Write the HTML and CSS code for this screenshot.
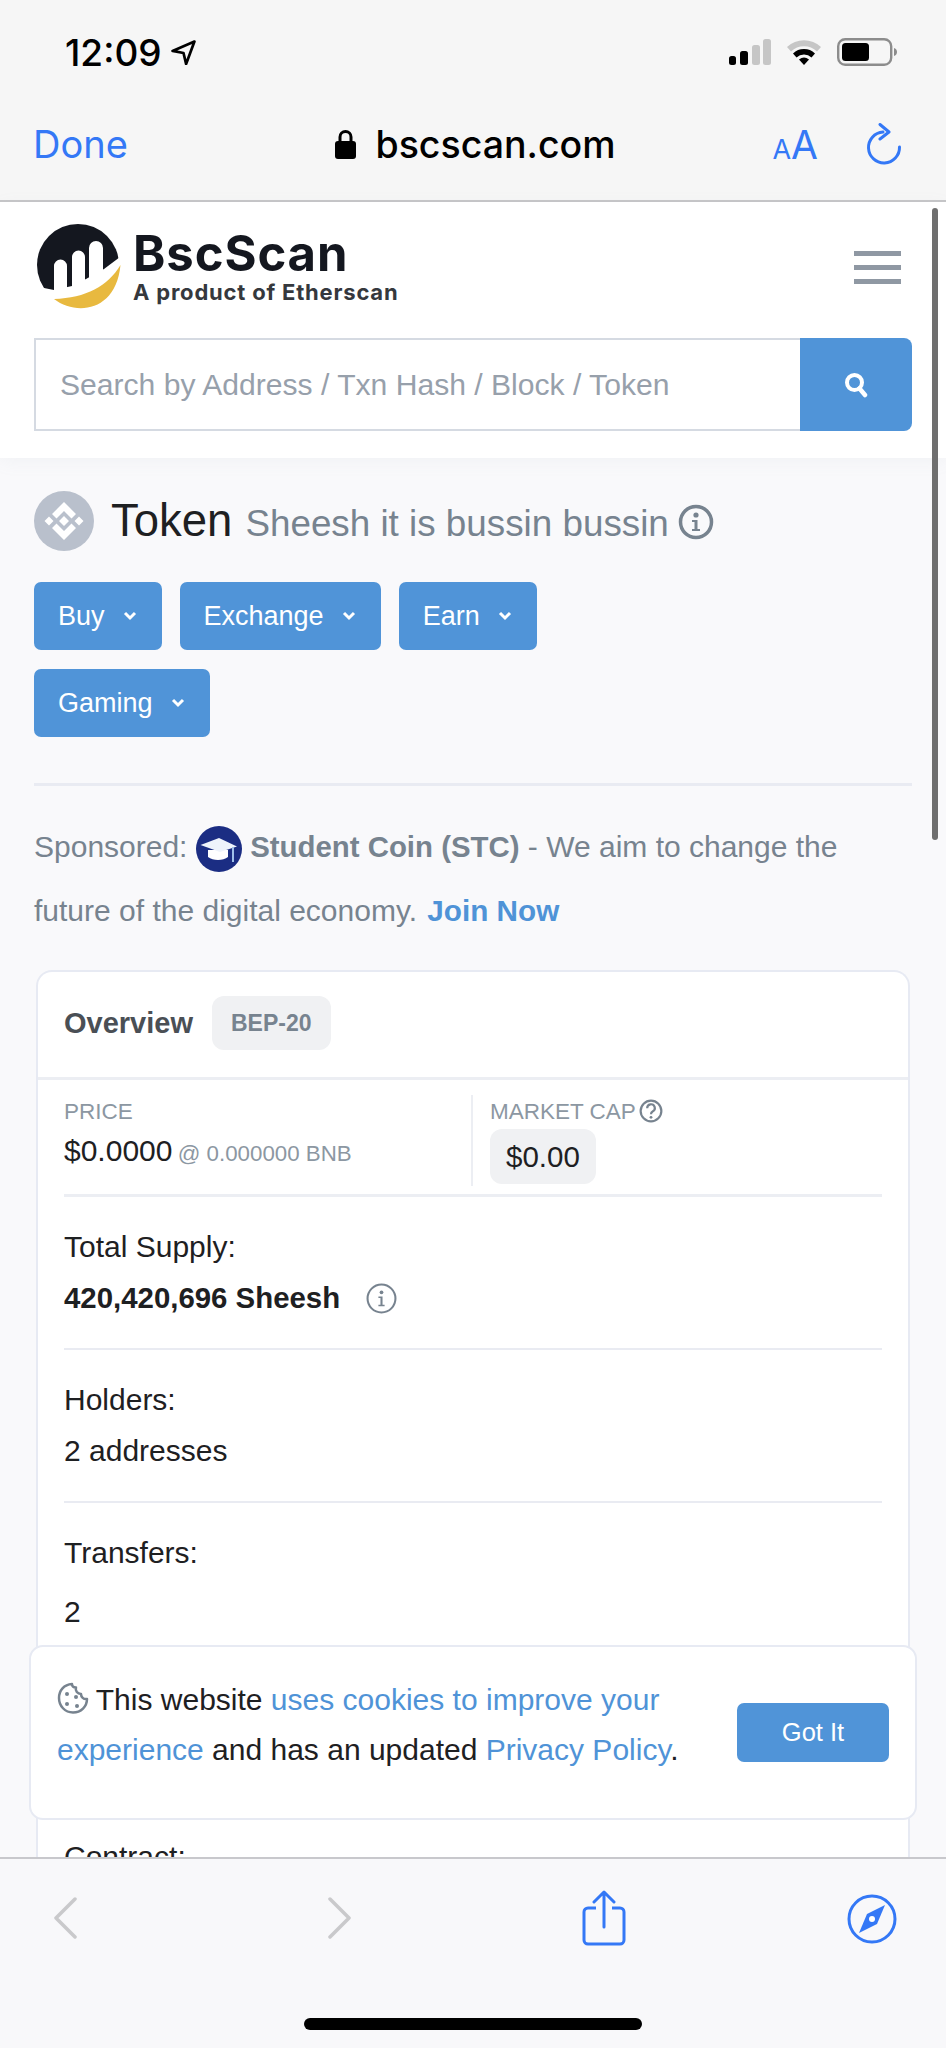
FILE: index.html
```html
<!DOCTYPE html>
<html lang="en">
	<head>
		<meta charset="UTF-8">
		<meta name="viewport" content="width=device-width, initial-scale=1.0">
		<title>Sheesh it is bussin bussin Token</title>
		<link rel="stylesheet" href="styles.css">
	</head>
	<body>
		<div class="browser-top">
			<div class="status-bar">
				<span class="time">12:09</span>
				<svg class="location" viewBox="0 0 24 24"><path d="M22.5 1.5 L1.5 10.5 L12 12.5 L14.5 23 Z" fill="none" stroke="#000" stroke-width="2.6" stroke-linejoin="round"/></svg>
				<div class="status-icons">
					<svg class="signal" viewBox="0 0 42 26">
						<rect x="0" y="17" width="7" height="9" rx="2.5" fill="#000"/>
						<rect x="11" y="12" width="8" height="14" rx="2.5" fill="#000"/>
						<rect x="23" y="6" width="8" height="20" rx="2.5" fill="#c6c6c6"/>
						<rect x="34" y="0" width="8" height="26" rx="2.5" fill="#c6c6c6"/>
					</svg>
					<svg class="wifi" viewBox="0 0 36 26">
						<path d="M1 8 A 25 25 0 0 1 35 8 L31 12.5 A 19 19 0 0 0 5 12.5 Z" fill="#c6c6c6"/>
						<path d="M7 14.5 A 16 16 0 0 1 29 14.5 L25.5 18.5 A 11 11 0 0 0 10.5 18.5 Z" fill="#000"/>
						<path d="M13 20.5 A 8 8 0 0 1 23 20.5 L18 26 Z" fill="#000"/>
					</svg>
					<svg class="battery" viewBox="0 0 60 28">
						<rect x="1.2" y="1.2" width="53" height="25.6" rx="7" fill="none" stroke="#8c8c8c" stroke-width="2.4"/>
						<rect x="5" y="5" width="27" height="18" rx="3.5" fill="#000"/>
						<path d="M57 10 C59.5 11 60 12.5 60 14 C60 15.500 59.500 17 57 18 Z" fill="#8c8c8c"/>
					</svg>
				</div>
			</div>
			<div class="toolbar">
				<a class="done" href="#">Done</a>
				<div class="address">
					<svg class="lock" viewBox="0 0 21 30"><path d="M5 13 V8 A5.500 5.500 0 0 1 16 8 V13" fill="none" stroke="#000" stroke-width="3"/><rect x="0" y="12" width="21" height="18" rx="3" fill="#000"/></svg>
					<span>bscscan.com</span>
				</div>
				<div class="toolbar-actions">
					<span class="text-size"><small>A</small>A</span>
					<svg class="reload" viewBox="0 0 36 42"><path d="M17 9 A 15.500 15.500 0 1 0 33.500 24" fill="none" stroke="#3478f6" stroke-width="3" stroke-linecap="round"/><path d="M14 1.500 L23 9 L14 16" fill="none" stroke="#3478f6" stroke-width="3" stroke-linecap="round" stroke-linejoin="round"/></svg>
				</div>
			</div>
		</div>

		<header class="site-header">
			<div class="brand-row">
				<a class="brand" href="#">
					<svg class="brand-logo" viewBox="0 0 86 86">
						<circle cx="42" cy="41" r="41" fill="#14171f"/>
						<path d="M18 80 V42 A6 6 0 0 1 31 42 V80 Z M36 80 V33 A6 6 0 0 1 49 33 V80 Z M53 80 V24 A6 6 0 0 1 67 24 V80 Z" fill="#fff"/>
						<path d="M3 63 L18 66 L36 62 L50 55 L68 45 L84 33 L90 33 L90 90 L0 90 Z" fill="#fff"/>
						<path d="M18 75 C40 92 80 88 84.500 41 C72 62 50 74 18 75 Z" fill="#e8b93f"/>
					</svg>
					<div class="brand-text">
						<div class="brand-name">BscScan</div>
						<div class="brand-sub">A product of Etherscan</div>
					</div>
				</a>
				<div class="hamburger"><span></span><span></span><span></span></div>
			</div>
			<form class="search">
				<input type="text" placeholder="Search by Address / Txn Hash / Block / Token">
				<button type="button" class="search-btn">
					<svg viewBox="0 0 24 26"><circle cx="10.500" cy="10.500" r="7.500" fill="none" stroke="#fff" stroke-width="4"/><path d="M15.500 16.500 L21 23" stroke="#fff" stroke-width="4.500" stroke-linecap="round"/></svg>
				</button>
			</form>
		</header>

		<main class="content">
			<div class="page-title">
				<svg class="token-logo" viewBox="0 0 60 60">
					<circle cx="30" cy="30" r="30" fill="#b9c0cc"/>
					<path d="M30 11 L42 23 L37.500 27.500 L30 20 L22.500 27.500 L18 23 Z M30 49 L42 37 L37.500 32.500 L30 40 L22.500 32.500 L18 37 Z M30 25 L35 30 L30 35 L25 30 Z M15 25.500 L19.500 30 L15 34.500 L10.500 30 Z M45 25.500 L49.500 30 L45 34.500 L40.500 30 Z" fill="#fff"/>
				</svg>
				<h1>Token</h1>
				<span class="token-name">Sheesh it is bussin bussin</span>
				<svg class="title-info" viewBox="0 0 36 36"><circle cx="18" cy="18" r="15.500" fill="none" stroke="#77838f" stroke-width="3.500"/><circle cx="18" cy="11" r="2.600" fill="#77838f"/><path d="M14 16 H19.500 V25 H22 V27 H14 V25 H16.500 V18 H14 Z" fill="#77838f"/></svg>
			</div>

			<div class="menu-buttons">
				<a class="menu-btn" href="#">Buy <svg viewBox="0 0 14 10"><path d="M2 2 L7 7 L12 2" fill="none" stroke="#fff" stroke-width="3"/></svg></a>
				<a class="menu-btn" href="#">Exchange <svg viewBox="0 0 14 10"><path d="M2 2 L7 7 L12 2" fill="none" stroke="#fff" stroke-width="3"/></svg></a>
				<a class="menu-btn" href="#">Earn <svg viewBox="0 0 14 10"><path d="M2 2 L7 7 L12 2" fill="none" stroke="#fff" stroke-width="3"/></svg></a>
				<a class="menu-btn" href="#">Gaming <svg viewBox="0 0 14 10"><path d="M2 2 L7 7 L12 2" fill="none" stroke="#fff" stroke-width="3"/></svg></a>
			</div>

			<hr class="rule">

			<p class="sponsored">
				Sponsored:
				<svg class="coin" viewBox="0 0 46 46">
					<circle cx="23" cy="23" r="23" fill="#1b2d83"/>
					<path d="M12 24 H32 V31 C27 35 17 35 12 31 Z" fill="#fff"/>
					<path d="M4.500 19 L23 12 L41 20.500 L24 26 Z" fill="#eef3fb"/>
					<path d="M37 21 V36" stroke="#9fc0ea" stroke-width="2"/>
				</svg>
				<b>Student Coin (STC)</b> - We aim to change the future of the digital economy. <a href="#">Join Now</a>
			</p>

			<section class="card">
				<div class="card-head">
					<h2>Overview</h2>
					<span class="tag">BEP-20</span>
				</div>
				<div class="card-body">
					<div class="stats">
						<div class="stat">
							<div class="stat-label">PRICE</div>
							<div class="stat-value">$0.0000 <small>@ 0.000000 BNB</small></div>
						</div>
						<div class="stat stat-cap">
							<div class="stat-label">MARKET CAP
								<svg class="help" viewBox="0 0 22 22"><circle cx="11" cy="11" r="9.500" fill="none" stroke="#77838f" stroke-width="2"/><path d="M7.500 8.500 A3.500 3.500 0 1 1 12.500 11.500 C11.300 12.200 11 12.800 11 14" fill="none" stroke="#77838f" stroke-width="2"/><circle cx="11" cy="16.800" r="1.300" fill="#77838f"/></svg>
							</div>
							<span class="cap-value">$0.00</span>
						</div>
					</div>
					<div class="row">
						<div>Total Supply:</div>
						<div><b>420,420,696 Sheesh</b>
							<svg class="supply-info" viewBox="0 0 30 30"><circle cx="15" cy="15" r="13.500" fill="none" stroke="#77838f" stroke-width="2"/><circle cx="15" cy="9" r="1.800" fill="#77838f"/><path d="M12 13 H16 V21 H18 V22.500 H12 V21 H14 V14.500 H12 Z" fill="#77838f"/></svg>
						</div>
					</div>
					<div class="row">
						<div>Holders:</div>
						<div>2 addresses</div>
					</div>
					<div class="row row-last">
						<div>Transfers:</div>
						<div class="row-count">2</div>
					</div>
					<div class="row">
						<div>Contract:</div>
					</div>
				</div>
			</section>
		</main>

		<div class="cookie-bar">
			<p>
				<svg class="cookie" viewBox="0 0 32 34"><path d="M15 3 C7 3.500 2 9.500 2 17 C2 25 8 31.500 16 31.500 C24 31.500 30 25.500 30 18 C26.500 18.500 24 16 24 13 C20.500 13 18 10 19 6.500 C16.500 6.500 15 5 15 3 Z" fill="none" stroke="#77838f" stroke-width="2.500" stroke-linejoin="round"/><circle cx="10" cy="13" r="2" fill="#77838f"/><circle cx="19" cy="16" r="2" fill="#77838f"/><circle cx="10" cy="23" r="2" fill="#77838f"/><circle cx="20" cy="25" r="2" fill="#77838f"/></svg>
				This website <a href="#">uses cookies to improve your experience</a> and has an updated <a href="#">Privacy Policy</a>.
			</p>
			<button type="button" class="got-it">Got It</button>
		</div>

		<div class="scrollbar"></div>

		<div class="browser-bottom">
			<div class="nav-icons">
				<svg class="chevron" viewBox="0 0 24 42"><path d="M22 2 L3 21 L22 40" fill="none" stroke="#c9c9cb" stroke-width="3.500" stroke-linecap="round" stroke-linejoin="round"/></svg>
				<svg class="chevron" viewBox="0 0 24 42"><path d="M2 2 L21 21 L2 40" fill="none" stroke="#c9c9cb" stroke-width="3.500" stroke-linecap="round" stroke-linejoin="round"/></svg>
				<svg class="share" viewBox="0 0 44 56"><path d="M14 18 H6 A4 4 0 0 0 2 22 V50 A4 4 0 0 0 6 54 H38 A4 4 0 0 0 42 50 V22 A4 4 0 0 0 38 18 H30" fill="none" stroke="#3478f6" stroke-width="3"/><path d="M22 37 V3 M12 12 L22 2 L32 12" fill="none" stroke="#3478f6" stroke-width="3" stroke-linecap="round" stroke-linejoin="round"/></svg>
				<svg class="compass" viewBox="0 0 50 50"><circle cx="25" cy="25" r="23" fill="none" stroke="#3478f6" stroke-width="3"/><path d="M38 11 L30 30 L12 39 L20 20 Z" fill="#3478f6"/><circle cx="25" cy="25" r="3" fill="#fff"/></svg>
			</div>
			<div class="home-indicator"></div>
		</div>
	</body>
</html>
```

FILE: styles.css
```css
html, body {
	margin: 0;
	height: 2048px;
	overflow: hidden;
}
body {
	position: relative;
	font-family: "Liberation Sans", Arial, sans-serif;
	font-size: 30px;
	color: #1e2022;
	background-color: #f9f9fb;
}
a {
	text-decoration: none;
}

.browser-top {
	background-color: #f6f6f6;
	border-bottom: 2px solid #c6c6c8;
	font-family: Inter, "Liberation Sans", sans-serif;
}
.status-bar {
	height: 100px;
	display: flex;
	align-items: center;
	padding: 4px 49px 0 65px;
	box-sizing: border-box;
}
.time {
	font-size: 37px;
	font-weight: 500;
	color: #000;
}
.location {
	width: 25px;
	height: 25px;
	margin-left: 9px;
}
.status-icons {
	margin-left: auto;
	display: flex;
	align-items: center;
	gap: 15px;
}
.signal {
	width: 42px;
	height: 26px;
}
.wifi {
	width: 36px;
	height: 26px;
}
.battery {
	width: 60px;
	height: 28px;
}
.toolbar {
	height: 100px;
	display: grid;
	grid-template-columns: 1fr auto 1fr;
	align-items: center;
	padding: 0 44px 12px 33px;
	box-sizing: border-box;
}
.done {
	font-size: 38px;
	color: #3478f6;
}
.address {
	display: flex;
	align-items: center;
	gap: 19px;
	margin-left: 16px;
	font-size: 37.500px;
	font-weight: 500;
	color: #000;
}
.lock {
	width: 21px;
	height: 30px;
}
.toolbar-actions {
	display: flex;
	align-items: center;
	justify-content: flex-end;
	gap: 48px;
}
.text-size {
	font-size: 39px;
	color: #3478f6;
}
.text-size small {
	font-size: 27px;
}
.reload {
	width: 36px;
	height: 42px;
}

.site-header {
	background: #fff;
	height: 256px;
	padding: 20px 34px 0;
	box-sizing: border-box;
	box-shadow: 0 4px 16px rgba(151, 164, 175, 0.08);
}
.brand-row {
	display: flex;
	align-items: center;
	justify-content: space-between;
	height: 90px;
}
.brand {
	display: flex;
	align-items: center;
	gap: 11px;
	color: #14171f;
}
.brand-logo {
	width: 86px;
	height: 86px;
	margin-left: 2px;
}
.brand-name {
	font-family: Inter, sans-serif;
	font-size: 49px;
	font-weight: 700;
	line-height: 50px;
	letter-spacing: 0.900px;
}
.brand-sub {
	font-family: Inter, sans-serif;
	font-size: 22px;
	font-weight: 700;
	line-height: 26px;
	letter-spacing: 0.800px;
	color: #35383d;
}
.hamburger {
	width: 47px;
	margin-right: 11px;
	display: flex;
	flex-direction: column;
	gap: 9px;
}
.hamburger span {
	height: 5px;
	background: #8f98a3;
}
.search {
	display: flex;
	height: 93px;
	margin-top: 26px;
}
.search input {
	flex: 1;
	min-width: 0;
	border: 2px solid #d5dae2;
	border-right: 0;
	padding: 0 0 0 24px;
	font-family: inherit;
	font-size: 30.100px;
	background: #fff;
	outline: none;
}
.search input::placeholder {
	color: #97a0ab;
	opacity: 1;
}
.search-btn {
	width: 112px;
	border: 0;
	background: #5094d8;
	border-radius: 0 8px 8px 0;
	padding: 0;
}
.search-btn svg {
	width: 24px;
	height: 26px;
	display: block;
	margin: auto;
}

.content {
	padding: 33px 34px 0;
}
.page-title {
	display: flex;
	align-items: center;
	height: 60px;
}
.token-logo {
	width: 60px;
	height: 60px;
	margin-right: 17px;
}
h1 {
	font-size: 45.500px;
	font-weight: 400;
	margin: 0 13px 0 0;
	color: #1e2022;
}
.token-name {
	font-size: 36.800px;
	color: #77838f;
	margin-top: 5px;
}
.title-info {
	width: 36px;
	height: 36px;
	margin: 2px 0 0 9px;
}
.menu-buttons {
	display: flex;
	flex-wrap: wrap;
	gap: 19px 18px;
	max-width: 560px;
	margin-top: 31px;
}
.menu-btn {
	display: flex;
	align-items: center;
	gap: 18px;
	height: 68px;
	padding: 0 25px 0 24px;
	background: #5094d8;
	color: #fff;
	border-radius: 7px;
	font-size: 27px;
}
.menu-btn svg {
	width: 14px;
	height: 10px;
}
.rule {
	border: 0;
	border-top: 3px solid #e9ebf2;
	margin: 46px 0 0;
}
.sponsored {
	margin: 29px 0 27px;
	line-height: 64px;
	color: #77838f;
}
.sponsored b {
	font-size: 29.400px;
}
.sponsored a {
	color: #4f93d7;
	font-weight: 700;
	font-size: 29.700px;
	margin-left: 2px;
}
.coin {
	width: 46px;
	height: 46px;
	vertical-align: -15px;
}
.card {
	margin: 0 2px;
	background: #fff;
	border: 2px solid #e7eaf3;
	border-bottom: 0;
	border-radius: 16px 16px 0 0;
}
.card-head {
	display: flex;
	align-items: center;
	gap: 19px;
	height: 108px;
	padding: 0 26px 3px;
	border-bottom: 3px solid #eceef3;
	box-sizing: border-box;
}
h2 {
	margin: 0;
	font-size: 29px;
	color: #4a4f55;
}
.tag {
	display: block;
	padding: 0 19px;
	line-height: 54px;
	background: #f0f1f3;
	border-radius: 12px;
	color: #77838f;
	font-size: 23px;
	font-weight: 700;
}
.card-body {
	padding: 0 26px;
}
.stats {
	display: flex;
	padding: 15px 0 8px;
	border-bottom: 3px solid #eceef3;
}
.stat {
	flex: 0 0 407px;
	height: 91px;
}
.stat-cap {
	border-left: 2px solid #eceef3;
	padding-left: 17px;
}
.stat-label {
	font-size: 22.500px;
	line-height: 34px;
	color: #8c97a2;
}
.stat-value {
	font-size: 30px;
	line-height: 44px;
}
.stat-value small {
	font-size: 22.300px;
	color: #8c97a2;
	margin-left: -3px;
}
.help {
	width: 24px;
	height: 24px;
	margin-left: -3px;
	vertical-align: -4px;
}
.cap-value {
	display: inline-block;
	padding: 0 16px;
	line-height: 55px;
	background: #f0f1f3;
	border-radius: 12px;
	font-size: 29.500px;
}
.row {
	padding: 24px 0 25px;
	line-height: 51px;
	border-bottom: 2px solid #e9ebf2;
}
.row b {
	font-size: 29.400px;
}
.row-last {
	height: 255px;
	border-bottom: 0;
}
.row-count {
	margin-top: 8px;
}
.supply-info {
	width: 31px;
	height: 31px;
	vertical-align: -6px;
	margin-left: 17px;
}

.cookie-bar {
	position: absolute;
	top: 1645px;
	left: 29px;
	width: 888px;
	height: 175px;
	display: flex;
	align-items: flex-start;
	justify-content: space-between;
	box-sizing: border-box;
	padding: 28px 26px 0 26px;
	background: #fff;
	border: 2px solid #e7eaf3;
	border-radius: 14px;
}
.cookie-bar p {
	margin: 0;
	width: 640px;
	line-height: 50px;
}
.cookie-bar a {
	color: #4f93d7;
}
.cookie {
	width: 32px;
	height: 34px;
	margin-right: -1px;
	vertical-align: -5px;
}
.got-it {
	width: 152px;
	height: 59px;
	margin-top: 28px;
	border: 0;
	border-radius: 7px;
	background: #5094d8;
	color: #fff;
	font-family: inherit;
	font-size: 25.500px;
}
.scrollbar {
	position: absolute;
	top: 208px;
	left: 932px;
	width: 6px;
	height: 632px;
	border-radius: 3px;
	background: #6f6f6f;
}
.browser-bottom {
	position: absolute;
	top: 1857px;
	left: 0;
	right: 0;
	height: 191px;
	background: #f8f8fa;
	border-top: 2px solid #c8c8cc;
	box-sizing: border-box;
}
.nav-icons {
	position: relative;
	display: grid;
	grid-template-columns: 275px 254px 265px auto;
	align-items: center;
	height: 58px;
	padding: 30px 0 0 53px;
}
.chevron {
	width: 24px;
	height: 42px;
}
.share {
	width: 44px;
	height: 56px;
}
.compass {
	width: 50px;
	height: 50px;
	margin-top: 2px;
}
.home-indicator {
	position: absolute;
	left: 304px;
	top: 159px;
	width: 338px;
	height: 12px;
	border-radius: 6px;
	background: #000;
}
```
